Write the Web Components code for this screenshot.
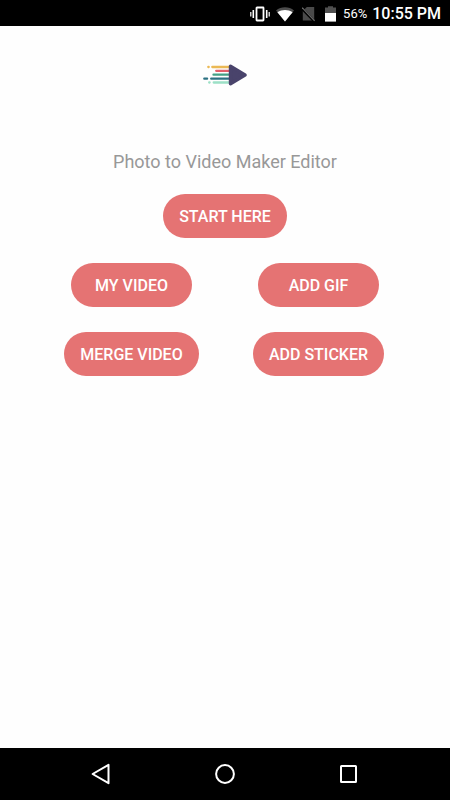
<!DOCTYPE html>
<html lang="en">
<head>
<meta charset="UTF-8">
<meta name="viewport" content="width=device-width, initial-scale=1">
<title>Photo to Video Maker Editor</title>
<style>
  body {
    margin: 0;
    background: #fefefe;
    font-family: Roboto, "Noto Sans", sans-serif;
  }
</style>
</head>
<body>

<app-screen>
  <status-bar slot="top" battery="56%" time="10:55 PM"></status-bar>

  <app-logo></app-logo>
  <app-title>Photo to Video Maker Editor</app-title>
  <pill-button>START HERE</pill-button>
  <action-grid>
    <pill-button>MY VIDEO</pill-button>
    <pill-button>ADD GIF</pill-button>
    <pill-button>MERGE VIDEO</pill-button>
    <pill-button>ADD STICKER</pill-button>
  </action-grid>

  <nav-bar slot="bottom"></nav-bar>
</app-screen>

<script>
// Small base: render the class template into an open shadow root
class BaseElement extends HTMLElement {
  constructor() {
    super();
    this.attachShadow({ mode: 'open' });
  }

  connectedCallback() {
    this.shadowRoot.innerHTML = this.template();
  }
}

class AppScreen extends BaseElement {
  template() {
    return `
      <style>
        :host {
          display: flex;
          flex-direction: column;
          min-height: 100vh;
        }

        main {
          flex: 1;
          display: flex;
          flex-direction: column;
          align-items: center;
          padding: 38px 38px 24px;
        }
      </style>
      <slot name="top"></slot>
      <main><slot></slot></main>
      <slot name="bottom"></slot>
    `;
  }
}

class StatusBar extends BaseElement {
  template() {
    return `
      <style>
        :host {
          display: flex;
          align-items: center;
          justify-content: flex-end;
          box-sizing: border-box;
          height: 26px;
          padding: 2px 9px 0 0;
          background: #000;
          color: #fff;
        }

        svg {
          display: block;
          height: 16px;
        }

        .vibrate { margin-right: 6px; }
        .wifi { margin-right: 8px; }
        .sim { margin-right: 10px; }
        .battery { margin-right: 7px; }

        .percent {
          margin-right: 5px;
          font-size: 13px;
          line-height: 24px;
        }

        .time {
          font-size: 16px;
          font-weight: 500;
          line-height: 24px;
        }
      </style>
      <svg class="vibrate" width="20" height="16" viewBox="0 0 20 16" fill="none" stroke="#fff">
        <rect x="6.5" y="1.5" width="7" height="13" rx="0.5" stroke-width="1.8"/>
        <path d="M3.3 4v8M16.7 4v8" stroke-width="1.6"/>
        <path d="M0.8 6v4.5M19.2 6v4.5" stroke-width="1.2"/>
      </svg>
      <svg class="wifi" width="18" height="16" viewBox="0 0 18 16">
        <path d="M9 15.4 0 4.4C5 0.2 13 0.2 18 4.4Z" fill="#4c4c4c"/>
        <path d="M9 15.4 1.4 6.2C6 3.2 12 3.2 16.6 6.2Z" fill="#fff"/>
      </svg>
      <svg class="sim" width="13" height="16" viewBox="0 0 13 16">
        <path d="M4.8 1h7.4v13.5H0.8V5Z" fill="#4a4a4a"/>
        <path d="M0 2.5 12.6 15.6" stroke="#000" stroke-width="2.6"/>
        <path d="M0.2 1.6 12.6 14.8" stroke="#666" stroke-width="1.2"/>
      </svg>
      <svg class="battery" width="11" height="16" viewBox="0 0 11 16">
        <path d="M3 0.2h5v1.4h3V7H0V1.6h3Z" fill="#505050"/>
        <path d="M0 7h11v8.6H0Z" fill="#fff"/>
      </svg>
      <span class="percent">${this.getAttribute('battery')}</span>
      <span class="time">${this.getAttribute('time')}</span>
    `;
  }
}

class AppLogo extends BaseElement {
  template() {
    return `
      <style>
        :host {
          display: block;
          margin-bottom: 64px;
        }

        svg { display: block; }
      </style>
      <svg width="44" height="22" viewBox="0 0 44 22" fill="none" stroke-width="2.3" stroke-linecap="round">
        <path d="M5.3 3h.4M9.3 3H27" stroke="#ebb955"/>
        <path d="M13.2 6.8H27" stroke="#e25f6a"/>
        <path d="M10.5 10.7H27" stroke="#43a085"/>
        <path d="M1.3 14.7h2.8M8.2 14.7H27" stroke="#2c7182"/>
        <path d="M6.2 18.5h.4M10.7 18.5H27" stroke="#9ce0c6"/>
        <path d="M27.5 2.2V19.8L42 11Z" fill="#49436b" stroke="#49436b" stroke-width="3.4" stroke-linejoin="round"/>
      </svg>
    `;
  }
}

class AppTitle extends BaseElement {
  template() {
    return `
      <style>
        :host { display: block; }

        h1 {
          margin: 0 0 20px;
          color: #989898;
          font-size: 18px;
          font-weight: 400;
          line-height: 24px;
          text-align: center;
        }
      </style>
      <h1><slot></slot></h1>
    `;
  }
}

class PillButton extends BaseElement {
  template() {
    return `
      <style>
        :host { display: block; }

        button {
          display: block;
          min-width: 121px;
          height: 44px;
          padding: 2px 16px 0;
          border: none;
          border-radius: 22px;
          background: #e57373;
          color: #fff;
          font-family: inherit;
          font-size: 16px;
          font-weight: 500;
          line-height: 20px;
          cursor: pointer;
        }

        button:active { background: #d96464; }
      </style>
      <button type="button"><slot></slot></button>
    `;
  }
}

class ActionGrid extends BaseElement {
  template() {
    return `
      <style>
        :host {
          display: grid;
          grid-template-columns: 1fr 1fr;
          row-gap: 25px;
          justify-items: center;
          width: 100%;
          margin-top: 25px;
        }
      </style>
      <slot></slot>
    `;
  }
}

class NavBar extends BaseElement {
  template() {
    return `
      <style>
        :host {
          display: block;
          background: #000;
        }

        nav {
          display: grid;
          grid-template-columns: repeat(3, 1fr);
          height: 52px;
          padding: 0 39px;
        }

        button {
          display: flex;
          align-items: center;
          justify-content: center;
          padding: 0;
          border: none;
          background: none;
          cursor: pointer;
        }
      </style>
      <nav>
        <button type="button" aria-label="Back">
          <svg width="22" height="22" viewBox="0 0 22 22" fill="none" stroke="#fff" stroke-width="2">
            <path d="M18.5 1.8V20.2L2.6 11Z" stroke-linejoin="round"/>
          </svg>
        </button>
        <button type="button" aria-label="Home">
          <svg width="22" height="22" viewBox="0 0 22 22" fill="none" stroke="#fff" stroke-width="2">
            <circle cx="11" cy="11" r="8.9"/>
          </svg>
        </button>
        <button type="button" aria-label="Recent apps">
          <svg width="22" height="22" viewBox="0 0 22 22" fill="none" stroke="#fff" stroke-width="2">
            <rect x="3" y="3" width="15" height="16" rx="0.5"/>
          </svg>
        </button>
      </nav>
    `;
  }
}

customElements.define('app-screen', AppScreen);
customElements.define('status-bar', StatusBar);
customElements.define('app-logo', AppLogo);
customElements.define('app-title', AppTitle);
customElements.define('pill-button', PillButton);
customElements.define('action-grid', ActionGrid);
customElements.define('nav-bar', NavBar);
</script>
</body>
</html>
